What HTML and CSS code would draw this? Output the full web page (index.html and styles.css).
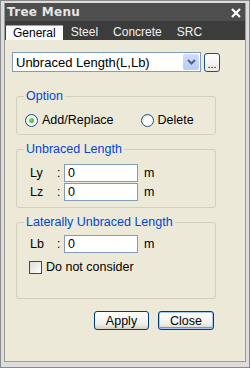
FILE: index.html
```html
<!DOCTYPE html>
<html lang="en">
<head>
  <meta charset="UTF-8">
  <title>Tree Menu</title>
  <link rel="stylesheet" href="styles.css">
</head>
<body>
  <div class="window">
    <div class="frame">
      <div class="titlebar">
        <span class="title">Tree Menu</span>
        <svg class="close-x" width="10" height="10" viewBox="0 0 10 10">
          <path d="M1 1 L9 9 M9 1 L1 9" stroke="#ffffff" stroke-width="2.2" fill="none"/>
        </svg>
      </div>
      <div class="tabs">
        <span class="tab active">General</span>
        <span class="tab">Steel</span>
        <span class="tab">Concrete</span>
        <span class="tab">SRC</span>
      </div>

      <div class="content">
        <div class="select-row">
          <div class="select">
            <span class="select-text">Unbraced Length(L,Lb)</span>
            <span class="select-btn">
              <svg width="9" height="6" viewBox="0 0 9 6">
                <path d="M1 1 L4.5 4.5 L8 1" stroke="#4d6185" stroke-width="2" fill="none"/>
              </svg>
            </span>
          </div>
          <button class="dots">...</button>
        </div>

        <fieldset class="group group-option">
          <legend>Option</legend>
          <div class="radios">
            <label class="radio"><span class="dot checked"></span>Add/Replace</label>
            <label class="radio delete"><span class="dot"></span>Delete</label>
          </div>
        </fieldset>

        <fieldset class="group group-unbraced">
          <legend>Unbraced Length</legend>
          <div class="field">
            <span class="name">Ly</span><span class="colon">:</span>
            <input class="num" type="text" value="0"><span class="unit">m</span>
          </div>
          <div class="field">
            <span class="name">Lz</span><span class="colon">:</span>
            <input class="num" type="text" value="0"><span class="unit">m</span>
          </div>
        </fieldset>

        <fieldset class="group group-lateral">
          <legend>Laterally Unbraced Length</legend>
          <div class="field">
            <span class="name">Lb</span><span class="colon">:</span>
            <input class="num" type="text" value="0"><span class="unit">m</span>
          </div>
          <label class="check"><span class="box"></span>Do not consider</label>
        </fieldset>

        <div class="buttons">
          <button class="btn">Apply</button>
          <button class="btn default">Close</button>
        </div>
      </div>
    </div>
  </div>
</body>
</html>
```

FILE: styles.css
```css
body {
  margin: 0;
  padding: 0;
  font-family: "Liberation Sans", Arial, sans-serif;
  font-size: 12px;
  background-color: #d8d8d8;
}
.window {
  width: 250px;
  height: 368px;
  box-sizing: border-box;
  border: 1px solid #8a8a8a;
  background-color: #dcdcdc;
  padding: 2px 3px 5px 3px;
  display: flex;
}
.frame {
  flex: 1;
  display: flex;
  flex-direction: column;
  border: 1px solid #9c9c9c;
  border-top: none;
}
.titlebar {
  height: 18px;
  background-color: #4e4e4e;
  display: flex;
  align-items: center;
  justify-content: space-between;
  padding: 0 4px 0 2px;
}
.title {
  font-family: "DejaVu Sans", Verdana, sans-serif;
  font-weight: bold;
  font-size: 12px;
  color: #e6e6e6;
  letter-spacing: 0.3px;
}
.close-x {
  margin-top: 1px;
}
.tabs {
  height: 19px;
  background-color: #3c3c3c;
  display: flex;
  align-items: flex-end;
  padding-left: 1px;
}
.tab {
  height: 15px;
  line-height: 15px;
  padding: 0 7px;
  margin-right: 1px;
  color: #f2f2f2;
  font-size: 12px;
}
.tab.active {
  background-color: #fcfcfc;
  color: #000;
  border-top: 1px solid #a0a0a0;
  height: 14px;
}
.content {
  flex: 1;
  background-color: #ece9d8;
  padding: 12px 0 0 7px;
}
.select-row {
  display: flex;
  align-items: center;
  gap: 3px;
}
.select {
  width: 189px;
  height: 20px;
  box-sizing: border-box;
  border: 1px solid #7f9db9;
  background-color: #fff;
  display: flex;
  align-items: center;
  justify-content: space-between;
  padding: 1px 1px 1px 3px;
}
.select-text {
  font-size: 13px;
}
.select-btn {
  width: 16px;
  height: 16px;
  border-radius: 2px;
  background: linear-gradient(#d2defb, #b7cbf7);
  display: flex;
  align-items: center;
  justify-content: center;
}
.dots {
  width: 16px;
  height: 19px;
  padding: 0 0 2px 0;
  border: 1px solid #1f4f80;
  border-radius: 3px;
  background: linear-gradient(#ffffff, #ecebe4);
  font-family: "Liberation Sans", Arial, sans-serif;
  font-size: 11px;
  line-height: 10px;
  display: flex;
  align-items: flex-end;
  justify-content: center;
}
.group {
  width: 200px;
  box-sizing: border-box;
  margin: 0 0 0 4px;
  border: 1px solid #d0d0bf;
  border-radius: 3px;
  padding: 0 0 0 7px;
}
.group legend {
  color: #0046d5;
  padding: 0 2px;
  line-height: 15px;
  font-size: 12.5px;
}
.group-option {
  margin-top: 17px;
  height: 46px;
}
.radios {
  display: flex;
  align-items: center;
  padding-top: 9px;
}
.radio {
  display: flex;
  align-items: center;
  gap: 4px;
  margin-left: 1px;
  font-size: 12.5px;
}
.radio.delete {
  margin-left: 27px;
}
.dot {
  width: 11px;
  height: 11px;
  border: 1px solid #1c5180;
  border-radius: 50%;
  background: radial-gradient(circle at 60% 60%, #ffffff 40%, #dcd9cd);
  display: flex;
  align-items: center;
  justify-content: center;
}
.dot.checked::after {
  content: "";
  width: 5px;
  height: 5px;
  border-radius: 50%;
  background: radial-gradient(circle at 40% 40%, #7ce07c, #21a121);
}
.group-unbraced {
  margin-top: 7px;
  height: 66px;
}
.group-unbraced .field:first-of-type {
  margin-top: 7px;
}
.field {
  display: flex;
  align-items: center;
  height: 18px;
  margin-bottom: 1px;
}
.name {
  width: 27px;
  margin-left: 6px;
  font-size: 12.5px;
}
.colon {
  width: 7px;
  font-size: 12px;
}
.num {
  width: 74px;
  height: 18px;
  box-sizing: border-box;
  border: 1px solid #7f9db9;
  padding: 0 3px;
  margin: 0;
  font-family: "Liberation Sans", Arial, sans-serif;
  font-size: 12.5px;
  outline: none;
}
.unit {
  margin-left: 6px;
  font-size: 12.5px;
}
.group-lateral {
  margin-top: 7px;
  height: 84px;
}
.group-lateral .field {
  margin-top: 5px;
}
.check {
  display: flex;
  align-items: center;
  gap: 4px;
  margin: 7px 0 0 5px;
  font-size: 12.5px;
}
.box {
  width: 11px;
  height: 11px;
  border: 1px solid #1c5180;
  background: linear-gradient(135deg, #dcdcd7, #ffffff);
}
.buttons {
  display: flex;
  justify-content: flex-end;
  gap: 9px;
  width: 202px;
  margin-top: 12px;
}
.btn {
  width: 55px;
  height: 19px;
  padding: 0;
  border: 1px solid #003c74;
  border-radius: 3px;
  background: linear-gradient(#ffffff, #f0f0ea 70%, #d6d0c5);
  font-family: "Liberation Sans", Arial, sans-serif;
  font-size: 12.5px;
  color: #000;
}
.btn.default {
  width: 56px;
  box-shadow: inset 0 0 0 1px #a9c6f2, inset 0 -1px 0 1px #6f97dc;
}
```
